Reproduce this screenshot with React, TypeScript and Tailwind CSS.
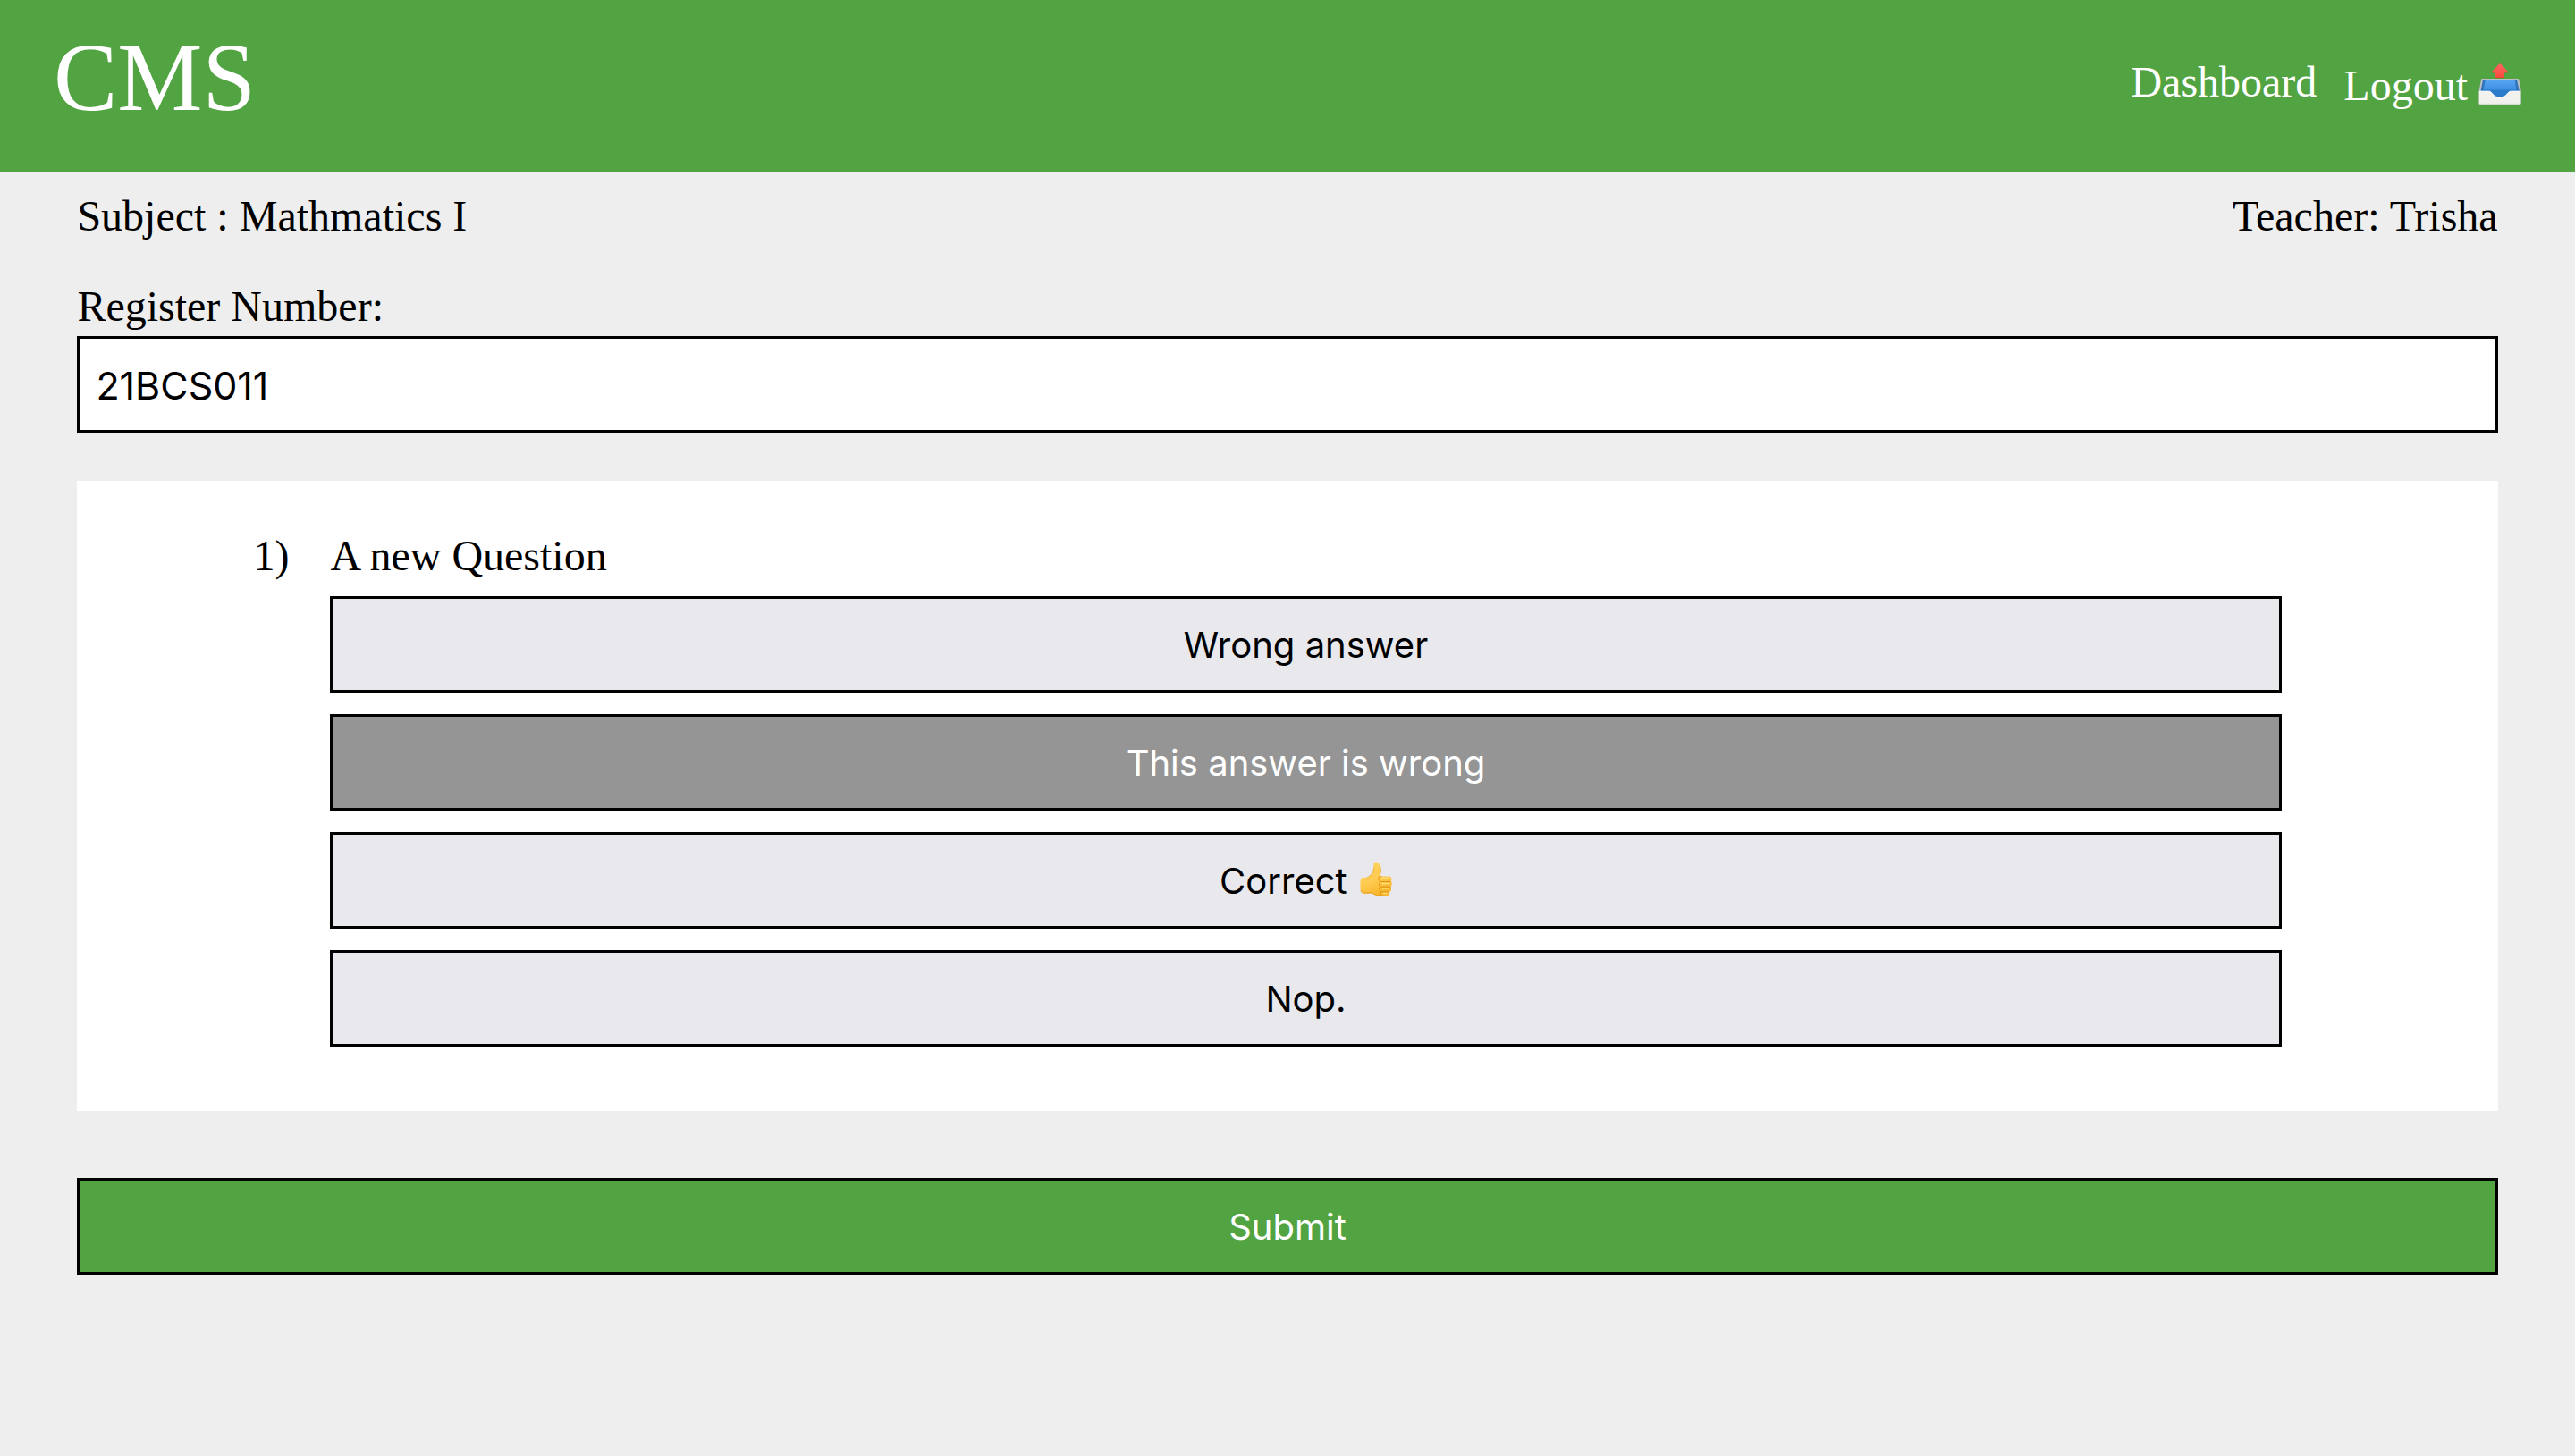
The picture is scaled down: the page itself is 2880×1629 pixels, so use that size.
import { useState } from "react";

function OutboxIcon() {
  return (
    <svg
      viewBox="0 0 142 138"
      className="inline-block h-[46px] w-[48px] align-[-5px]"
      role="img"
      aria-label="outbox tray"
    >
      <defs>
        <linearGradient id="tray-back" x1="0" y1="0" x2="0" y2="1">
          <stop offset="0" stopColor="#57a6f3" />
          <stop offset="1" stopColor="#3d8fe2" />
        </linearGradient>
        <linearGradient id="tray-arrow" x1="0" y1="0" x2="0" y2="1">
          <stop offset="0" stopColor="#ff6560" />
          <stop offset="1" stopColor="#fb4a3e" />
        </linearGradient>
      </defs>
      <path d="M11 51 H131 Q134 51 135 54 L142 91 V136 H1 V91 L8 54 Q8 51 11 51 Z" fill="#b9bfc4" />
      <path d="M14 55 H128 L137 95 H6 Z" fill="#2f74bd" />
      <path d="M22 55 H121 L126 89 H16 Z" fill="url(#tray-back)" />
      <path d="M10 89 H132 L134 106 L90 118 H54 L8 106 Z" fill="#2b7bcb" />
      <path
        d="M1 93 H34 C46 93 48 114 71 114 C94 114 96 93 108 93 H141 V135 Q141 137 139 137 H3 Q1 137 1 135 Z"
        fill="#f1f1ee"
      />
      <path
        d="M2 93 H34 C46 93 48 114 71 114 C94 114 96 93 108 93 H140"
        fill="none"
        stroke="#ffffff"
        strokeWidth="2"
      />
      <path d="M2 136 H140" stroke="#d3d6cf" strokeWidth="2" />
      <path
        d="M68 2 Q71 -1 74 2 L97 26 Q100 31 95 31 H86 V45 Q86 48 83 48 H59 Q56 48 56 45 V31 H47 Q42 31 45 26 Z"
        fill="url(#tray-arrow)"
      />
      <path d="M57 47 H85 M45 30 H55 M87 30 H97" stroke="#d93a33" strokeWidth="2" />
    </svg>
  );
}

function ThumbIcon() {
  return (
    <svg
      viewBox="0 0 108 116"
      className="ml-[3px] inline-block h-[39px] w-[36px] align-[-3px]"
      role="img"
      aria-label="thumbs up"
    >
      <defs>
        <linearGradient id="thumb-skin" x1="0" y1="0" x2="0.4" y2="1">
          <stop offset="0" stopColor="#ffd35c" />
          <stop offset="0.6" stopColor="#ffcb52" />
          <stop offset="1" stopColor="#f8b62c" />
        </linearGradient>
      </defs>
      <path
        d="M2 62 Q4 53 14 53 H24 C36 46 46 36 46 22 V9 Q46 0 55 1 C66 3 71 17 70 31 L67 49 H98 Q106 50 106 57 Q107 62 104 66 Q109 70 107 77 Q106 82 103 84 Q106 88 105 94 Q103 100 98 102 Q101 113 89 115 H76 C60 115 52 113 42 106 L10 106 Q3 104 2 94 Q0 78 2 62 Z"
        fill="url(#thumb-skin)"
      />
      <path d="M24 54 C37 47 48 36 47 20" fill="none" stroke="#f0ae2b" strokeWidth="3" />
      <path d="M69 18 Q72 34 66 48" fill="none" stroke="#efaa27" strokeWidth="3" />
      <path d="M3 96 Q6 106 14 105 L40 104 C52 113 64 114 84 114" fill="none" stroke="#e79d1c" strokeWidth="3" />
      <g fill="none" stroke="#dd9216" strokeWidth="3" strokeLinecap="round">
        <path d="M72 49 Q61 49 62 59 Q63 65 71 67 H102" />
        <path d="M69 67 Q61 74 66 82 L72 84 H102" />
        <path d="M68 84 Q62 92 68 99 L74 101 H97" />
        <path d="M70 101 Q66 108 72 113" />
      </g>
      <g fill="none" stroke="#ffdc70" strokeWidth="4" strokeLinecap="round">
        <path d="M74 55 H98" />
        <path d="M75 73 H99" />
        <path d="M76 90 H97" />
        <path d="M78 106 H90" />
      </g>
    </svg>
  );
}

const options = [
  { id: "a", text: "Wrong answer", thumb: false },
  { id: "b", text: "This answer is wrong", thumb: false },
  { id: "c", text: "Correct", thumb: true },
  { id: "d", text: "Nop.", thumb: false },
];

const buttonBase =
  "flex w-full items-center justify-center border-3 border-black px-5 pt-6 pb-[22px] font-['Inter',sans-serif] text-[40px] leading-[56px]";

export default function App() {
  const [register, setRegister] = useState("21BCS011");
  const [selected, setSelected] = useState("b");

  return (
    <div className="min-h-screen bg-[#eeeeee] font-['Liberation_Serif',serif] text-[48px] leading-[56px] text-black">
      <header className="flex items-start justify-between bg-[#52a341] px-[60px] pt-[27px] pb-[45px] text-white">
        <a href="#home" className="text-[107px] leading-[120px]">
          CMS
        </a>
        <nav className="flex items-start gap-[30px] pt-[37px]">
          <a href="#dashboard">Dashboard</a>
          <a href="#logout" className="leading-[64px]">
            Logout <OutboxIcon />
          </a>
        </nav>
      </header>

      <main className="px-[3%] pt-[22px] pb-24">
        <div className="flex justify-between">
          <p>Subject : Mathmatics I</p>
          <p>Teacher: Trisha</p>
        </div>

        <form onSubmit={(e) => e.preventDefault()}>
          <label htmlFor="register" className="mt-[45px] block">
            Register Number:
          </label>
          <input
            id="register"
            type="text"
            value={register}
            onChange={(e) => setRegister(e.target.value)}
            className="mt-[5px] block w-full border-3 border-black bg-white px-[18px] pt-6 pb-[22px] font-['Inter',sans-serif] text-[43px] leading-[56px] outline-none"
          />

          <section className="mt-[54px] flex bg-white pt-14 pr-[242px] pb-[72px] pl-[197px]">
            <span className="w-[86px] shrink-0">1)</span>
            <div className="grow">
              <h2 className="mb-[17px]">A new Question</h2>
              <div className="flex flex-col gap-6">
                {options.map((option) => (
                  <button
                    key={option.id}
                    type="button"
                    aria-pressed={selected === option.id}
                    onClick={() => setSelected(option.id)}
                    className={`${buttonBase} ${
                      selected === option.id ? "bg-[#959595] text-white" : "bg-[#e9e8ed] text-black"
                    }`}
                  >
                    <span>
                      {option.text}
                      {option.thumb && (
                        <>
                          {" "}
                          <ThumbIcon />
                        </>
                      )}
                    </span>
                  </button>
                ))}
              </div>
            </div>
          </section>

          <button type="submit" className={`${buttonBase} mt-[75px] bg-[#52a341] text-white`}>
            Submit
          </button>
        </form>
      </main>
    </div>
  );
}
